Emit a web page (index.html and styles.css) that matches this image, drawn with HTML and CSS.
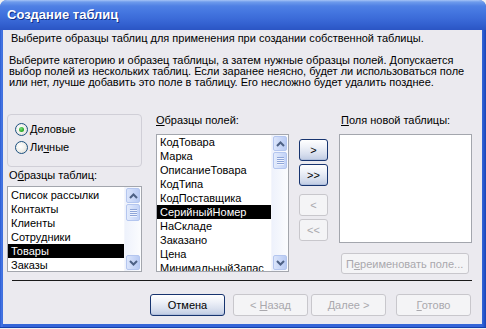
FILE: index.html
```html
<!DOCTYPE html>
<html>
<head>
<meta charset="utf-8">
<title>Создание таблиц</title>
<link rel="stylesheet" href="styles.css">
</head>
<body>
<div class="window">
  <div class="titlebar">Создание таблиц</div>
  <div class="client">
    <div class="header">Выберите образцы таблиц для применения при создании собственной таблицы.</div>
    <div class="intro">Выберите категорию и образец таблицы, а затем нужные образцы полей. Допускается<br>выбор полей из нескольких таблиц. Если заранее неясно, будет ли использоваться поле<br>или нет, лучше добавить это поле в таблицу. Его несложно будет удалить позднее.</div>

    <div class="main">
      <div class="col col-tables">
        <div class="group">
          <div class="radio checked"><span class="circle"></span><span><u>Д</u>еловые</span></div>
          <div class="radio"><span class="circle"></span><span>Ли<u>ч</u>ные</span></div>
        </div>
        <div class="label label-tables">О<u>б</u>разцы таблиц:</div>
        <div class="listbox lb-tables">
          <ul class="items">
            <li>Список рассылки</li>
            <li>Контакты</li>
            <li>Клиенты</li>
            <li>Сотрудники</li>
            <li class="sel">Товары</li>
            <li>Заказы</li>
          </ul>
          <div class="sb">
            <div class="sb-btn"><svg width="9" height="6" viewBox="0 0 9 6"><polyline points="1,5 4.5,1.5 8,5" fill="none" stroke="#4d6185" stroke-width="2"/></svg></div>
            <div class="sb-thumb"><span></span><span></span><span></span><span></span></div>
            <div class="sb-track"></div>
            <div class="sb-btn"><svg width="9" height="6" viewBox="0 0 9 6"><polyline points="1,1 4.5,4.5 8,1" fill="none" stroke="#4d6185" stroke-width="2"/></svg></div>
          </div>
        </div>
      </div>

      <div class="col col-fields">
        <div class="label"><u>О</u>бразцы полей:</div>
        <div class="listbox lb-fields">
          <ul class="items">
            <li>КодТовара</li>
            <li>Марка</li>
            <li>ОписаниеТовара</li>
            <li>КодТипа</li>
            <li>КодПоставщика</li>
            <li class="sel">СерийныйНомер</li>
            <li>НаСкладе</li>
            <li>Заказано</li>
            <li>Цена</li>
            <li>МинимальныйЗапас</li>
          </ul>
          <div class="sb">
            <div class="sb-btn"><svg width="9" height="6" viewBox="0 0 9 6"><polyline points="1,5 4.5,1.5 8,5" fill="none" stroke="#4d6185" stroke-width="2"/></svg></div>
            <div class="sb-thumb"><span></span><span></span><span></span><span></span></div>
            <div class="sb-track"></div>
            <div class="sb-btn"><svg width="9" height="6" viewBox="0 0 9 6"><polyline points="1,1 4.5,4.5 8,1" fill="none" stroke="#4d6185" stroke-width="2"/></svg></div>
          </div>
        </div>
      </div>

      <div class="col col-move">
        <div class="btn mv"><span>&gt;</span></div>
        <div class="btn mv"><span>&gt;&gt;</span></div>
        <div class="btn mv disabled gap"><span>&lt;</span></div>
        <div class="btn mv disabled"><span>&lt;&lt;</span></div>
      </div>

      <div class="col col-new">
        <div class="label label-new"><u>П</u>оля новой таблицы:</div>
        <div class="listbox lb-new"></div>
        <div class="btn disabled rename"><span>П<u>е</u>реименовать поле...</span></div>
      </div>
    </div>

    <div class="separator"></div>

    <div class="buttons">
      <div class="btn wiz default"><span>Отмена</span></div>
      <div class="btn wiz disabled back"><span>&lt; <u>Н</u>азад</span></div>
      <div class="btn wiz disabled next"><span><u>Д</u>алее &gt;</span></div>
      <div class="btn wiz disabled finish"><span><u>Г</u>отово</span></div>
    </div>
  </div>
</div>
</body>
</html>
```

FILE: styles.css
```css
* { box-sizing: border-box; margin: 0; padding: 0; }

html, body {
  width: 486px;
  height: 329px;
  overflow: hidden;
}

body {
  background: #f1f1f1;
  font-family: "Liberation Sans", Arial, sans-serif;
  font-size: 11px;
  color: #000;
}

u { text-decoration: underline; text-underline-offset: 1px; }

.window {
  width: 486px;
  height: 328px;
  display: flex;
  flex-direction: column;
  background: linear-gradient(to right, #2b5bd2 0px, #4a7be6 2px, #3566d8 3px, #3566d8 482px, #2656cc 484px, #1a44b4 486px);
  border-radius: 7px 7px 0 0;
  border-bottom: 1px solid #163fae;
}

.titlebar {
  height: 30px;
  flex: none;
  border-radius: 7px 7px 0 0;
  background: linear-gradient(to bottom, #a6c4f6 0px, #6d9bec 2px, #4f80e4 6px, #4476e0 12px, #3c6cd9 18px, #3361d0 24px, #2b55c4 30px);
  color: #fff;
  font-family: "Liberation Sans", Arial, sans-serif;
  font-weight: bold;
  font-size: 13px;
  line-height: 30px;
  padding-left: 7px;
  text-shadow: 1px 1px 0 #10308a;
}

.client {
  flex: 1;
  margin: 0 4px 3px 3px;
  background: #ebeaef;
  display: flex;
  flex-direction: column;
}

.header {
  padding: 2px 0 0 8px;
  line-height: 13px;
}

.intro {
  margin-top: 10px;
  padding-left: 6px;
  line-height: 11px;
}

.main {
  margin-top: 26px;
  padding-left: 4px;
  height: 166px;
  display: flex;
  align-items: flex-start;
}

.col { display: flex; flex-direction: column; }

.col-tables { width: 135px; }
.col-fields { width: 133px; margin-left: 14px; }
.col-move { width: 29px; margin-left: 10px; padding-top: 25px; }
.col-new { width: 133px; margin-left: 11px; }

.group {
  height: 53px;
  border: 1px solid #d0cfd7;
  border-radius: 4px;
  padding-top: 5px;
}

.radio {
  height: 18px;
  display: flex;
  align-items: center;
  padding-left: 7px;
}

.circle {
  width: 13px;
  height: 13px;
  border-radius: 50%;
  border: 1px solid #1c5180;
  background: radial-gradient(circle at 40% 40%, #ffffff 0%, #f2f2ee 45%, #d6d4cc 100%);
  margin-right: 2px;
  display: flex;
  align-items: center;
  justify-content: center;
}

.radio.checked .circle::after {
  content: "";
  width: 5px;
  height: 5px;
  border-radius: 50%;
  background: radial-gradient(circle at 40% 35%, #7ee07e 0%, #2fb02f 55%, #1a8a1a 100%);
}

.label { line-height: 13px; }
.label-tables { margin-top: 2px; padding-left: 2px; }
.label-new { padding-left: 2px; }

.listbox {
  background: #fff;
  border: 1px solid #a3a6ad;
  display: flex;
  overflow: hidden;
}

.lb-tables { height: 86px; margin-top: 4px; }
.lb-fields { height: 138px; margin-top: 7px; }
.lb-new { height: 109px; margin-top: 7px; }

.items {
  list-style: none;
  flex: 1;
  overflow: hidden;
}

.lb-tables .items { padding-top: 1px; }

.items li {
  height: 14px;
  line-height: 14px;
  padding-left: 3px;
  white-space: nowrap;
}

.items li.sel {
  background: #000;
  color: #fff;
}

.sb {
  width: 17px;
  flex: none;
  display: flex;
  flex-direction: column;
  padding: 1px;
  background: linear-gradient(to right, #eef2fc, #fbfcfe);
  border-left: 1px solid #f4f6fc;
}

.sb-btn {
  height: 15px;
  flex: none;
  border: 1px solid #b4c6ef;
  border-radius: 2px;
  background: linear-gradient(to right, #dbe5fb, #c6d5f7 60%, #b9cbf3);
  display: flex;
  align-items: center;
  justify-content: center;
}

.sb-thumb {
  height: 17px;
  flex: none;
  margin-top: 1px;
  border: 1px solid #b4c6ef;
  border-radius: 2px;
  background: linear-gradient(to right, #e4ecfc, #cfdcf9 60%, #c3d3f7);
  display: flex;
  flex-direction: column;
  align-items: center;
  justify-content: center;
  gap: 1px;
}

.sb-thumb span {
  width: 7px;
  height: 1px;
  background: #8ea5d8;
  box-shadow: 0 1px 0 #eef3fe;
}

.sb-track { flex: 1; }

.btn {
  display: flex;
  align-items: center;
  justify-content: center;
  border-radius: 3px;
  white-space: pre;
}

.btn.mv,
.btn.default {
  border: 1px solid #17346f;
  background: linear-gradient(to bottom, #ffffff 0%, #eef1f8 35%, #d8dfee 70%, #bfcbe3 100%);
  box-shadow: inset 0 -1px 0 #b0bfdc;
}

.btn.disabled {
  border: 1px solid #c8c7cc;
  background: #f4f4f6;
  color: #a9a8ad;
  box-shadow: none;
}

.mv {
  height: 22px;
  margin-bottom: 3px;
}

.mv.gap { margin-top: 5px; }

.rename {
  margin-top: 10px;
  margin-left: 2px;
  width: 128px;
  height: 21px;
  justify-content: flex-start;
  padding-left: 4px;
}

.separator {
  margin: 0 0 0 9px;
  width: 460px;
  height: 1px;
  background: #1a1a1a;
}

.buttons {
  margin-top: 13px;
  padding-left: 147px;
  display: flex;
}

.wiz {
  width: 75px;
  height: 22px;
}

.back { margin-left: 8px; }
.next { margin-left: 3px; }
.finish { margin-left: 10px; }
```
